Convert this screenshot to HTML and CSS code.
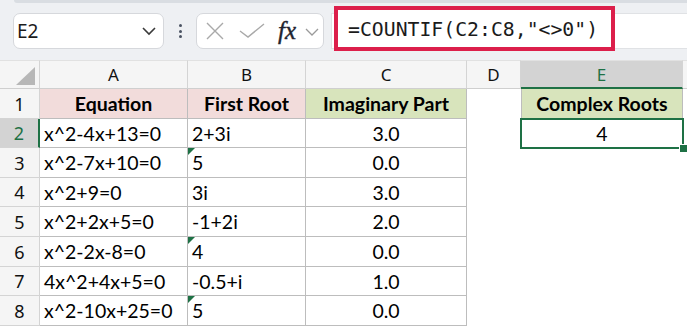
FILE: index.html
```html
<!DOCTYPE html>
<html>
<head>
<meta charset="utf-8">
<link rel="stylesheet" href="styles.css">
</head>
<body>
<div class="app">
  <div class="ribbon-edge"></div>
  <div class="toolbar">
    <div class="namebox">
      <span class="nb-text">E2</span>
      <svg class="nb-chev" width="16" height="10" viewBox="0 0 16 10"><path d="M2 2 L8 8 L14 2" fill="none" stroke="#3b3b3b" stroke-width="1.6"/></svg>
    </div>
    <div class="dots"><i></i><i></i><i></i></div>
    <div class="fxbox">
      <svg class="ic-x" width="18" height="18" viewBox="0 0 18 18"><path d="M1 1 L17 17 M17 1 L1 17" stroke="#a9a9a9" stroke-width="1.4" fill="none"/></svg>
      <svg class="ic-check" width="26" height="16" viewBox="0 0 26 16"><path d="M1 8 L9 14 L25 1" stroke="#a9a9a9" stroke-width="1.4" fill="none"/></svg>
      <span class="fx">fx</span>
      <svg class="fx-chev" width="14" height="8" viewBox="0 0 14 8"><path d="M1 1 L7 7 L13 1" fill="none" stroke="#9a9a9a" stroke-width="1.3"/></svg>
    </div>
    <div class="formula">
      <div class="formula-hl">=COUNTIF(C2:C8,"&lt;&gt;0")</div>
    </div>
  </div>
  <div class="sheet">
    <div class="corner"><span class="corner-tri"></span></div>
    <div class="ch">A</div>
    <div class="ch">B</div>
    <div class="ch">C</div>
    <div class="ch">D</div>
    <div class="ch sel">E</div>
    <div class="ch fill"></div>

    <div class="rh">1</div>
    <div class="c t h pink">Equation</div>
    <div class="c t h pink">First Root</div>
    <div class="c t h green">Imaginary Part</div>
    <div class="c"></div>
    <div class="c t h green e1">Complex Roots</div>
    <div class="c"></div>

    <div class="rh sel">2</div>
    <div class="c t l">x^2-4x+13=0</div>
    <div class="c t l">2+3i</div>
    <div class="c t m">3.0</div>
    <div class="c"></div>
    <div class="c m active">4</div>
    <div class="c"></div>

    <div class="rh">3</div>
    <div class="c t l">x^2-7x+10=0</div>
    <div class="c t l tri">5</div>
    <div class="c t m">0.0</div>
    <div class="c"></div>
    <div class="c"></div>
    <div class="c"></div>

    <div class="rh">4</div>
    <div class="c t l">x^2+9=0</div>
    <div class="c t l">3i</div>
    <div class="c t m">3.0</div>
    <div class="c"></div>
    <div class="c"></div>
    <div class="c"></div>

    <div class="rh">5</div>
    <div class="c t l">x^2+2x+5=0</div>
    <div class="c t l">-1+2i</div>
    <div class="c t m">2.0</div>
    <div class="c"></div>
    <div class="c"></div>
    <div class="c"></div>

    <div class="rh">6</div>
    <div class="c t l">x^2-2x-8=0</div>
    <div class="c t l tri">4</div>
    <div class="c t m">0.0</div>
    <div class="c"></div>
    <div class="c"></div>
    <div class="c"></div>

    <div class="rh">7</div>
    <div class="c t l">4x^2+4x+5=0</div>
    <div class="c t l">-0.5+i</div>
    <div class="c t m">1.0</div>
    <div class="c"></div>
    <div class="c"></div>
    <div class="c"></div>

    <div class="rh">8</div>
    <div class="c t l">x^2-10x+25=0</div>
    <div class="c t l tri">5</div>
    <div class="c t m">0.0</div>
    <div class="c"></div>
    <div class="c"></div>
    <div class="c"></div>
  </div>
</div>
</body>
</html>
```
FILE: styles.css
```css
* { box-sizing: border-box; }
html, body { margin: 0; padding: 0; background: #fff; }
.app { width: 687px; height: 327px; overflow: hidden; background: #eef0f3; }

.ribbon-edge {
  height: 3px;
  margin-left: 14px;
  background: #d9dde2;
  border-bottom-left-radius: 4px;
}

.toolbar {
  height: 57px;
  display: flex;
  align-items: flex-start;
  padding-top: 10px;
  padding-left: 13px;
  font-family: "Noto Sans", "Open Sans", sans-serif;
}

.namebox {
  width: 151px;
  height: 36px;
  background: #fff;
  border: 1px solid #d6d8dc;
  border-radius: 7px;
  display: flex;
  align-items: center;
  padding-left: 3px;
  padding-right: 6px;
}
.nb-text { font-size: 19px; color: #1b1b1b; flex: 1; }
.nb-chev { display: block; }

.dots {
  width: 32px;
  height: 36px;
  display: flex;
  flex-direction: column;
  align-items: center;
  justify-content: center;
  gap: 2.5px;
}
.dots i { display: block; width: 3px; height: 3px; border-radius: 50%; background: #4a5262; }

.fxbox {
  width: 128px;
  height: 36px;
  background: #fff;
  border: 1px solid #d6d8dc;
  border-radius: 7px;
  display: flex;
  align-items: center;
  padding-left: 9px;
}
.ic-x { display: block; }
.ic-check { display: block; margin-left: 15px; }
.fx {
  font-family: "Liberation Serif", "DejaVu Serif", serif;
  font-style: italic;
  font-size: 25px;
  color: #1f2430;
  margin-left: 13px;
  line-height: 1;
  margin-top: -2px;
  -webkit-text-stroke: 0.4px #1f2430;
}
.fx-chev { display: block; margin-left: 9px; margin-top: 2px; }

.formula {
  flex: 1;
  margin-left: 7px;
  height: 36px;
  background: #fff;
  border-top: 1px solid #e0e2e5;
  border-bottom: 1px solid #e0e2e5;
  border-left: 1px solid #e0e2e5;
  padding-left: 2px;
}
.formula-hl {
  width: 281px;
  height: 45px;
  margin-top: -8px;
  border: 4px solid #dc1f4b;
  background: #fff;
  display: flex;
  align-items: center;
  padding-left: 10px;
  padding-top: 1px;
  font-family: "DejaVu Sans Mono", "Liberation Mono", monospace;
  font-size: 19.8px;
  color: #1b1b1b;
  white-space: nowrap;
}

.sheet {
  display: grid;
  grid-template-columns: 40px 148px 118px 161px 54px 162px 1fr;
  grid-template-rows: 29px 30px 29px 30px 29px 30px 30px 29px 30px 1fr;
  background: #fff;
  height: 267px;
  font-family: "Lato", "Open Sans", sans-serif;
}

.corner {
  background: #f5f5f5;
  border-right: 1px solid #d4d4d4;
  border-bottom: 1px solid #cfcfcf;
  border-top: 1px solid #e1e1e1;
  position: relative;
}
.corner-tri {
  position: absolute;
  left: 16px;
  top: 6px;
  width: 0;
  height: 0;
  border-left: 19px solid transparent;
  border-bottom: 18px solid #b7b7b7;
}

.ch {
  background: #f5f5f5;
  border-right: 1px solid #d4d4d4;
  border-bottom: 1px solid #cfcfcf;
  border-top: 1px solid #e1e1e1;
  font-family: "Noto Sans", "Open Sans", sans-serif;
  font-size: 17px;
  color: #111;
  display: flex;
  align-items: center;
  justify-content: center;
}
.ch.sel {
  background: #d3d3d3;
  color: #1e7145;
  border-bottom: 2px solid #1e7145;
}
.ch.fill { border-right: none; }

.rh {
  background: #f5f5f5;
  border-right: 1px solid #d4d4d4;
  border-bottom: 1px solid #d4d4d4;
  font-family: "Noto Sans", "Open Sans", sans-serif;
  font-size: 18px;
  color: #111;
  display: flex;
  align-items: center;
  justify-content: center;
}
.rh.sel {
  background: #d3d3d3;
  color: #1e7145;
  border-right: 2px solid #1e7145;
}

.c {
  font-size: 19.5px;
  color: #000;
  display: flex;
  align-items: center;
  padding: 0 4px;
  white-space: nowrap;
  position: relative;
}
.t {
  border-right: 1px solid #bdbdbd;
  border-bottom: 1px solid #bdbdbd;
}
.l { justify-content: flex-start; }
.m { justify-content: center; }
.h { font-weight: 700; justify-content: center; font-size: 19.5px; }
.pink { background: #f2dcdb; }
.green { background: #d8e4bc; }
.e1 { border-left: 1px solid #bdbdbd; }

.tri::before {
  content: "";
  position: absolute;
  left: 0;
  top: 0;
  width: 0;
  height: 0;
  border-top: 7px solid #1e7145;
  border-right: 7px solid transparent;
}

.active {
  outline: 2px solid #1e7145;
  outline-offset: -1px;
  z-index: 2;
}
.active::after {
  content: "";
  position: absolute;
  right: -4px;
  bottom: -4px;
  width: 7px;
  height: 7px;
  background: #1e7145;
  border-left: 1px solid #fff;
  border-top: 1px solid #fff;
}
```
